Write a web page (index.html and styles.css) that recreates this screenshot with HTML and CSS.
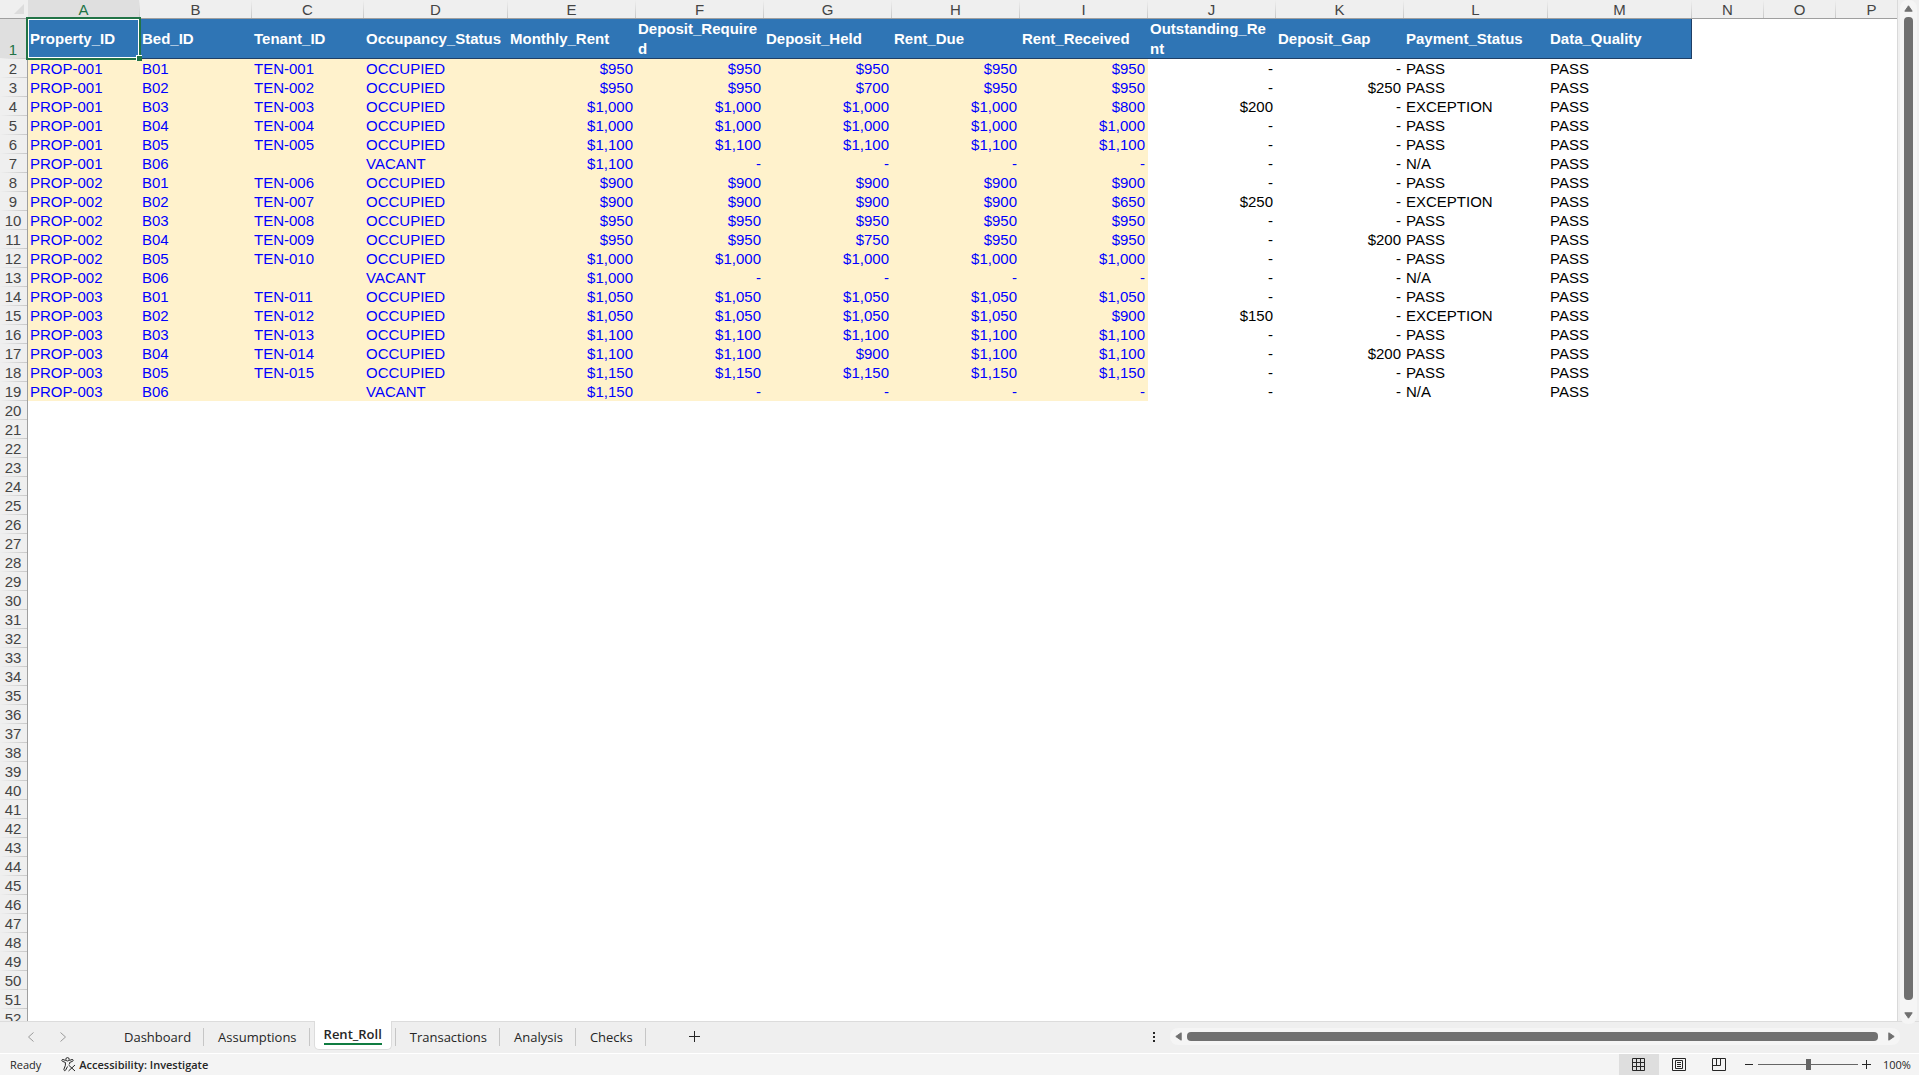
FILE: index.html
```html
<!DOCTYPE html>
<html lang="en">
<head>
<meta charset="utf-8">
<title>Rent_Roll</title>
<link rel="stylesheet" href="styles.css">
</head>
<body>
<main class="workspace">
  <div class="sheet">
    <table class="grid">
      <colgroup>
        <col class="c-head"><col class="c-id"><col class="c-id"><col class="c-id"><col class="c-wide">
        <col class="c-money"><col class="c-money"><col class="c-money"><col class="c-money"><col class="c-money"><col class="c-money"><col class="c-money">
        <col class="c-wide"><col class="c-wide"><col class="c-std"><col class="c-std"><col class="c-std">
      </colgroup>
      <thead>
        <tr class="letters">
          <th class="corner"><svg width="10" height="10" viewBox="0 0 10 10" aria-hidden="true"><path d="M10 0V10H0Z" fill="#dcdcdc"/></svg></th>
          <th scope="col" class="active">A</th><th scope="col">B</th><th scope="col">C</th><th scope="col">D</th><th scope="col">E</th><th scope="col">F</th><th scope="col">G</th><th scope="col">H</th><th scope="col">I</th><th scope="col">J</th><th scope="col">K</th><th scope="col">L</th><th scope="col">M</th><th scope="col">N</th><th scope="col">O</th><th scope="col">P</th>
        </tr>
      </thead>
      <tbody id="rows">
        <tr class="fields">
          <th scope="row" class="active">1</th>
          <td class="selected">Property_ID<span class="handle"></span></td><td>Bed_ID</td><td>Tenant_ID</td><td>Occupancy_Status</td><td>Monthly_Rent</td><td>Deposit_Required</td><td>Deposit_Held</td><td>Rent_Due</td><td>Rent_Received</td><td>Outstanding_Rent</td><td>Deposit_Gap</td><td>Payment_Status</td><td class="last">Data_Quality</td><td class="blank"></td><td class="blank"></td><td class="blank"></td>
        </tr>
      </tbody>
    </table>
  </div>
  <div class="vscroll">
    <button class="arrow" aria-label="Scroll up"><svg width="9" height="7" viewBox="0 0 9 7"><path d="M4.500 .8 8.200 6.200H.8Z"/></svg></button>
    <div class="thumb"></div>
    <button class="arrow" aria-label="Scroll down"><svg width="9" height="7" viewBox="0 0 9 7"><path d="M4.500 6.200 .8 .8H8.200Z"/></svg></button>
  </div>
</main>
<nav class="tabbar" aria-label="Sheets">
  <div class="steps">
    <button aria-label="Previous sheet"><svg width="8" height="10" viewBox="0 0 8 10"><path d="M6.500 .5 1.500 5 6.500 9.500"/></svg></button>
    <button aria-label="Next sheet"><svg width="8" height="10" viewBox="0 0 8 10"><path d="M1.500 .5 6.500 5 1.500 9.500"/></svg></button>
  </div>
  <div class="tabs">
    <button class="tab">Dashboard</button>
    <button class="tab">Assumptions</button>
    <button class="tab current"><span>Rent_Roll</span></button>
    <button class="tab">Transactions</button>
    <button class="tab">Analysis</button>
    <button class="tab">Checks</button>
  </div>
  <button class="add" aria-label="New sheet"><svg width="11" height="11" viewBox="0 0 11 11"><path d="M5.500 0V11M0 5.500H11"/></svg></button>
  <button class="more" aria-label="Resize tab area"><svg width="2" height="10" viewBox="0 0 2 10"><path d="M0 0h2v2H0zM0 4h2v2H0zM0 8h2v2H0z"/></svg></button>
  <div class="hscroll">
    <button class="arrow" aria-label="Scroll left"><svg width="7" height="9" viewBox="0 0 7 9"><path d="M.8 4.500 6.200 .8V8.200Z"/></svg></button>
    <div class="thumb"></div>
    <button class="arrow" aria-label="Scroll right"><svg width="7" height="9" viewBox="0 0 7 9"><path d="M6.200 4.500 .8 8.200V.8Z"/></svg></button>
  </div>
</nav>
<footer class="status">
  <span class="ready">Ready</span>
  <button class="access">
    <svg width="15" height="15" viewBox="0 0 15 15" aria-hidden="true"><circle cx="6.500" cy="2.300" r="1.700"/><path d="M4.700 3.500 2 2.500C.7 2.200.3 3.900 1.500 4.300L4.400 5.500V8.300L2.900 12.300C2.600 13.700 4.200 14.200 4.700 13L6.500 9.500M8.300 3.500 11 2.500C12.300 2.200 12.700 3.900 11.500 4.300L8.600 5.500V7.300M7.500 8 14 14M14 8 7.500 14"/></svg>
    Accessibility: Investigate
  </button>
  <div class="views">
    <button class="view on" aria-label="Normal view"><svg width="14" height="14" viewBox="0 0 14 14"><path d="M.5 .5H12.500V12.500H.5ZM4.500 .5V12.500M8.500 .5V12.500M.5 4.500H12.500M.5 8.500H12.500"/></svg></button>
    <button class="view" aria-label="Page layout"><svg width="14" height="14" viewBox="0 0 14 14"><path d="M.5 .5H13.500V12.500H.5ZM3.500 2.500H10.500V10.500H3.500ZM5 4.500H9M5 6.500H9M5 8.500H9"/></svg></button>
    <button class="view" aria-label="Page break preview"><svg width="14" height="14" viewBox="0 0 14 14"><path d="M.5 .5H13.500V12.500H.5ZM.5 7.500H8.500V.5M4.500 .5V7.500"/></svg></button>
  </div>
  <div class="zoom">
    <button aria-label="Zoom out"><svg width="9" height="9" viewBox="0 0 9 9"><path d="M0 4.500H8"/></svg></button>
    <input type="range" min="0" max="100" value="50" aria-label="Zoom">
    <button aria-label="Zoom in"><svg width="9" height="9" viewBox="0 0 9 9"><path d="M0 4.500H9M4.500 0V9"/></svg></button>
    <span class="percent">100%</span>
  </div>
</footer>
<script src="sheet.js"></script>
</body>
</html>
```
FILE: styles.css
```css
* {
  box-sizing: border-box;
}

body {
  margin: 0;
  height: 100vh;
  display: flex;
  flex-direction: column;
  overflow: hidden;
  background: #efefef;
  color: #262626;
  font-family: "Open Sans", "Noto Sans", sans-serif;
  font-size: 13px;
}

button {
  display: flex;
  align-items: center;
  justify-content: center;
  margin: 0;
  padding: 0;
  border: 0;
  background: none;
  color: inherit;
  font: inherit;
}

svg {
  display: block;
  flex: none;
  fill: none;
  stroke: currentColor;
}

.workspace {
  flex: 1;
  min-height: 0;
  display: flex;
}

.sheet {
  flex: 1;
  min-width: 0;
  overflow: hidden;
  background: #fff;
  border-right: 1px solid #d9d9d9;
}

/* Grid */

.grid {
  width: 1880px;
  table-layout: fixed;
  border-collapse: separate;
  border-spacing: 0;
  font: 15px/19px "Liberation Sans", Arial, sans-serif;
  color: #000;
}

.c-head { width: 28px; }
.c-id { width: 112px; }
.c-wide { width: 144px; }
.c-money { width: 128px; }
.c-std { width: 72px; }

.grid th,
.grid td {
  height: 19px;
  padding: 0 2px;
  white-space: nowrap;
}

.grid th {
  padding: 0;
  color: #444;
  font-weight: 400;
  text-align: center;
}

.grid .letters th {
  padding: 2px 1px 0 0;
  background: linear-gradient(#efefef, #c8c8c8) right / 1px 100% no-repeat #efefef;
  border-bottom: 1px solid #9f9f9f;
  line-height: 16px;
}

.grid .letters .corner {
  padding: 4px 3px 4px 14px;
  background: #efefef;
}

.corner svg {
  stroke: none;
}

.grid tbody th {
  padding-right: 1px;
  background: linear-gradient(90deg, #efefef, #c8c8c8) bottom / 100% 1px no-repeat #efefef;
  border-right: 1px solid #9f9f9f;
}

.grid .letters .active,
.grid tbody .active {
  background-color: #dfdfdf;
  color: #217346;
}

.grid tbody .active {
  vertical-align: bottom;
}

.grid .fields td {
  height: 40px;
  background: #2f75b5;
  box-shadow: inset 0 -1px #1f3f66;
  color: #fff;
  font-weight: 700;
  line-height: 20px;
  white-space: normal;
  word-break: break-all;
}

.grid .fields .last {
  box-shadow: inset -1px -1px #1f3f66;
}

.grid .fields .blank {
  background: none;
  box-shadow: none;
}

.grid .input {
  background: #fff2cc;
  color: #00f;
}

.grid .money {
  padding-right: 3px;
  text-align: right;
}

.selected {
  position: relative;
}

.selected::after {
  content: "";
  position: absolute;
  inset: -2px -1px -1px -2px;
  border: 2px solid #217346;
  box-shadow: inset 0 0 0 1px #fff;
}

.handle {
  position: absolute;
  z-index: 1;
  right: -2px;
  bottom: -2px;
  width: 6px;
  height: 6px;
  background: #217346;
  border: solid #fff;
  border-width: 1px 0 0 1px;
}

/* Scroll bars */

.vscroll,
.hscroll {
  display: flex;
  align-items: center;
  background: #f5f5f5;
  border-radius: 8px;
}

.vscroll {
  flex-direction: column;
  z-index: 1;
  width: 17px;
  margin: 0 2px -3px;
  padding: 5px 0;
  gap: 5px;
}

.hscroll {
  width: 730px;
  height: 17px;
  margin-right: 19px;
  padding: 0 5px;
  gap: 5px;
}

.arrow svg {
  fill: #707070;
  stroke: #707070;
  stroke-linejoin: round;
}

.thumb {
  flex: 1;
  border-radius: 4px;
  background: #707070;
}

.vscroll .thumb {
  width: 9px;
  margin-bottom: 7px;
}

.hscroll .thumb {
  height: 9px;
  margin-right: 5px;
}

/* Sheet tabs */

.tabbar {
  display: flex;
  align-items: center;
  height: 33px;
  padding-bottom: 2px;
  border-top: 1px solid #dcdcdc;
  border-bottom: 1px solid #fff;
}

.steps {
  display: flex;
  gap: 24px;
  width: 110px;
  padding-left: 27px;
  color: #9a9a9a;
}

.tabs {
  display: flex;
  align-self: stretch;
}

.tab {
  position: relative;
  padding: 0 13px 0 14px;
}

.tab::after {
  content: "";
  position: absolute;
  top: 6px;
  right: 0;
  width: 1px;
  height: 18px;
  background: #c6c6c6;
}

.tab.current {
  align-self: flex-start;
  height: 29px;
  margin: -1px 4px 0;
  padding: 0 9px;
  background: #fff;
  border: 1px solid #dcdcdc;
  border-top: 0;
  border-radius: 0 0 5px 5px;
  font-weight: 600;
}

.tab.current::after {
  top: 7px;
  right: -5px;
}

.tab.current span {
  height: 20px;
  line-height: 18px;
  border-bottom: 2px solid #107c41;
}

.add {
  margin-left: 43px;
}

.more {
  margin: 0 15px 0 auto;
}

.more svg {
  fill: #262626;
  stroke: none;
}

/* Status bar */

.status {
  display: flex;
  align-items: center;
  height: 21px;
  padding: 0 8px 0 10px;
  background: #f4f4f4;
  font-size: 11px;
}

.access {
  gap: 3px;
  margin-left: 20px;
  font-weight: 600;
}

.views {
  display: flex;
  align-self: stretch;
  margin-left: auto;
}

.view {
  width: 40px;
}

.view.on {
  background: #dedede;
}

.zoom {
  display: flex;
  align-items: center;
  gap: 4px;
  margin-left: 6px;
}

.zoom input {
  width: 100px;
  height: 11px;
  margin: 0;
  appearance: none;
  background: linear-gradient(#666, #666) center / 100% 1px no-repeat;
}

.zoom input::-webkit-slider-thumb {
  appearance: none;
  width: 5px;
  height: 11px;
  background: #666;
}

.percent {
  width: 28px;
  margin-left: 8px;
}
```
FILE: sheet.js
```js
const LAST_ROW = 52;

// Property, bed, tenant, status, rent, deposit required, deposit held, due, received
const beds = [
  ["PROP-001", "B01", "TEN-001", "OCCUPIED", 950, 950, 950, 950, 950],
  ["PROP-001", "B02", "TEN-002", "OCCUPIED", 950, 950, 700, 950, 950],
  ["PROP-001", "B03", "TEN-003", "OCCUPIED", 1000, 1000, 1000, 1000, 800],
  ["PROP-001", "B04", "TEN-004", "OCCUPIED", 1000, 1000, 1000, 1000, 1000],
  ["PROP-001", "B05", "TEN-005", "OCCUPIED", 1100, 1100, 1100, 1100, 1100],
  ["PROP-001", "B06", "", "VACANT", 1100, 0, 0, 0, 0],
  ["PROP-002", "B01", "TEN-006", "OCCUPIED", 900, 900, 900, 900, 900],
  ["PROP-002", "B02", "TEN-007", "OCCUPIED", 900, 900, 900, 900, 650],
  ["PROP-002", "B03", "TEN-008", "OCCUPIED", 950, 950, 950, 950, 950],
  ["PROP-002", "B04", "TEN-009", "OCCUPIED", 950, 950, 750, 950, 950],
  ["PROP-002", "B05", "TEN-010", "OCCUPIED", 1000, 1000, 1000, 1000, 1000],
  ["PROP-002", "B06", "", "VACANT", 1000, 0, 0, 0, 0],
  ["PROP-003", "B01", "TEN-011", "OCCUPIED", 1050, 1050, 1050, 1050, 1050],
  ["PROP-003", "B02", "TEN-012", "OCCUPIED", 1050, 1050, 1050, 1050, 900],
  ["PROP-003", "B03", "TEN-013", "OCCUPIED", 1100, 1100, 1100, 1100, 1100],
  ["PROP-003", "B04", "TEN-014", "OCCUPIED", 1100, 1100, 900, 1100, 1100],
  ["PROP-003", "B05", "TEN-015", "OCCUPIED", 1150, 1150, 1150, 1150, 1150],
  ["PROP-003", "B06", "", "VACANT", 1150, 0, 0, 0, 0],
];

const money = (n) => (n ? "$" + n.toLocaleString("en-US") : "-");

function addCell(row, value, className) {
  const cell = row.insertCell();
  if (className) cell.className = className;
  cell.textContent = typeof value === "number" ? money(value) : value;
  if (typeof value === "number") cell.classList.add("money");
}

const body = document.getElementById("rows");
for (let n = 2; n <= LAST_ROW; n++) {
  const row = body.insertRow();
  const head = document.createElement("th");
  head.scope = "row";
  head.textContent = n;
  row.append(head);

  const bed = beds[n - 2];
  if (!bed) continue;
  const [, , , status, , required, held, due, received] = bed;
  const owed = due - received;
  const payment = status === "VACANT" ? "N/A" : owed > 0 ? "EXCEPTION" : "PASS";
  bed.forEach((value) => addCell(row, value, "input"));
  [owed, required - held, payment, "PASS"].forEach((value) => addCell(row, value));
}
```
